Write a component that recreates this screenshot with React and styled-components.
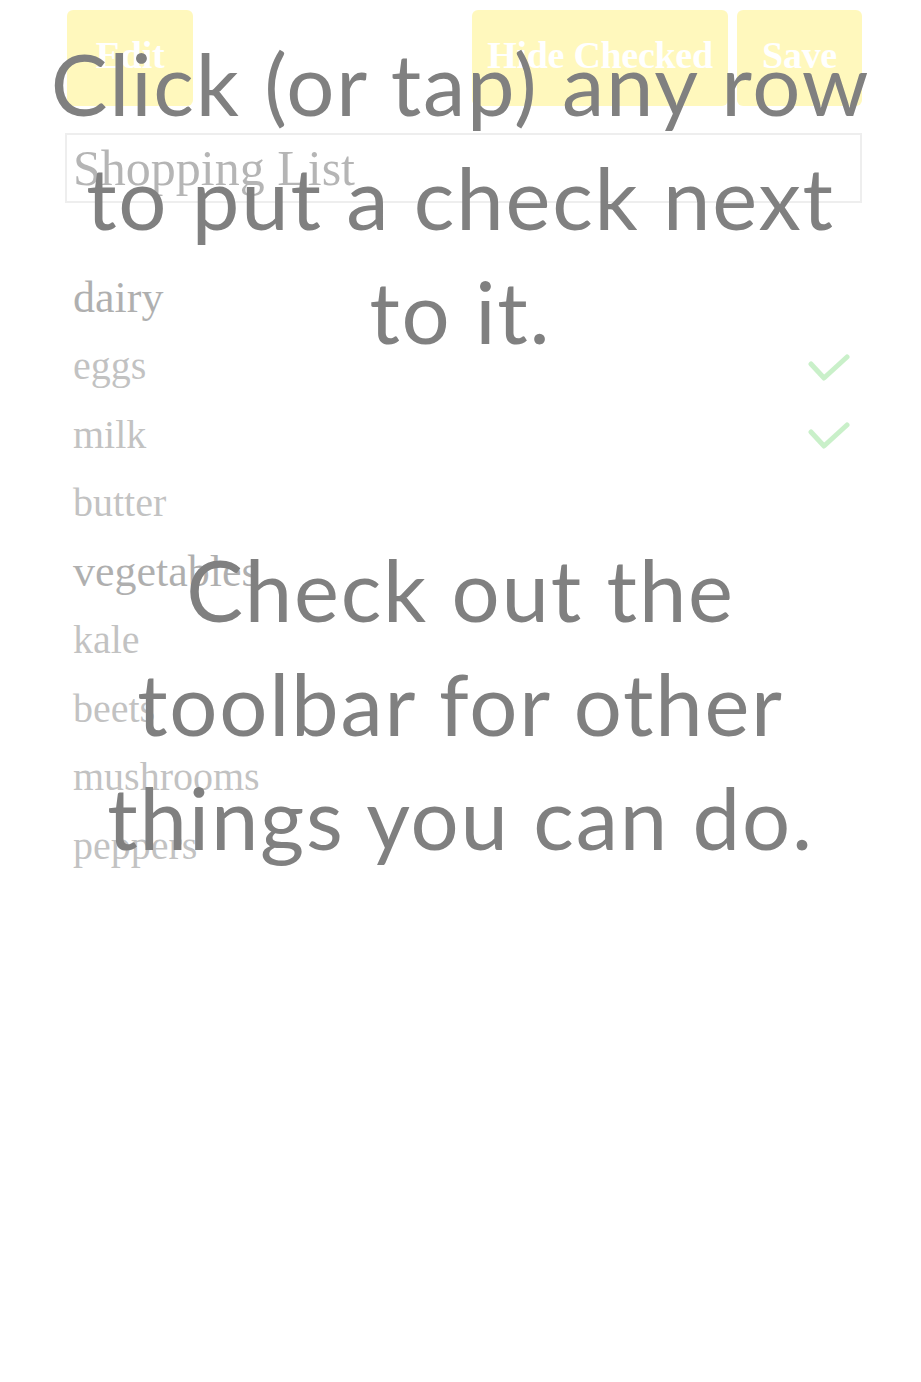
import styled, { createGlobalStyle } from "styled-components";

const GlobalStyle = createGlobalStyle`
  html, body {
    margin: 0;
    padding: 0;
    background: #ffffff;
  }
`;

const Page = styled.div`
  position: relative;
  min-height: 1382px;
  overflow: hidden;
`;

// the app underneath, washed out by the help overlay
const AppShell = styled.div`
  opacity: 0.33;
  padding: 10px 59px 0 65px;
  font-family: "Liberation Serif", "Times New Roman", serif;
`;

const Toolbar = styled.div`
  display: flex;
  align-items: stretch;
  gap: 9px;
  padding-left: 2px;
`;

const Spacer = styled.div`
  flex: 1;
`;

const ToolButton = styled.button`
  width: ${({ $width }) => $width}px;
  height: 96px;
  border: 0;
  border-radius: 6px;
  background: #ffeb3b;
  color: #ffffff;
  font-family: "Liberation Serif", "Times New Roman", serif;
  font-weight: 700;
  font-size: 38px;
  letter-spacing: -0.3px;
  padding: 0 0 6px;
`;

const TitleInput = styled.input`
  display: block;
  box-sizing: border-box;
  width: 100%;
  height: 70px;
  margin-top: 27px;
  padding: 0 6px;
  border: 2px solid #cccccc;
  background: #ffffff;
  color: #222222;
  font-family: "Liberation Serif", "Times New Roman", serif;
  font-size: 50px;
  outline: none;
`;

const List = styled.ul`
  list-style: none;
  margin: 60px 0 0;
  padding: 0;
`;

const Row = styled.li`
  display: flex;
  align-items: center;
  justify-content: space-between;
  height: 68.5px;
  padding: 0 12px 0 8px;
  font-size: ${({ $category }) => ($category ? 44 : 40)}px;
  color: ${({ $category }) => ($category ? "#111111" : "#4a4a4a")};
`;

const Check = styled.svg`
  width: 42px;
  height: 32px;
  flex: none;
  margin-top: 8px;
`;

const HelpOverlay = styled.div`
  position: absolute;
  top: 26px;
  left: 0;
  right: 0;
  text-align: center;
  color: #808080;
  font-family: Lato, "Open Sans", sans-serif;
  font-size: 85px;
  letter-spacing: 1.8px;
  line-height: 114px;
`;

const HelpText = styled.p`
  margin: 0;

  & + & {
    margin-top: 164px;
  }
`;

const items = [
  { label: "dairy", category: true },
  { label: "eggs", checked: true },
  { label: "milk", checked: true },
  { label: "butter" },
  { label: "vegetables", category: true },
  { label: "kale" },
  { label: "beets" },
  { label: "mushrooms" },
  { label: "peppers" },
];

function CheckMark() {
  return (
    <Check viewBox="0 0 42 32">
      <polyline
        points="3,10 16,24 39,3"
        fill="none"
        stroke="#5fd35f"
        strokeWidth="5"
        strokeLinecap="round"
        strokeLinejoin="round"
      />
    </Check>
  );
}

export default function App() {
  return (
    <>
      <GlobalStyle />
      <Page>
        <AppShell>
          <Toolbar>
            <ToolButton $width={126}>Edit</ToolButton>
            <Spacer />
            <ToolButton $width={256}>Hide Checked</ToolButton>
            <ToolButton $width={125}>Save</ToolButton>
          </Toolbar>
          <TitleInput defaultValue="Shopping List" readOnly />
          <List>
            {items.map((item) => (
              <Row key={item.label} $category={item.category}>
                <span>{item.label}</span>
                {item.checked && <CheckMark />}
              </Row>
            ))}
          </List>
        </AppShell>
        <HelpOverlay>
          <HelpText>
            Click (or tap) any row
            <br />
            to put a check next
            <br />
            to it.
          </HelpText>
          <HelpText>
            Check out the
            <br />
            toolbar for other
            <br />
            things you can do.
          </HelpText>
        </HelpOverlay>
      </Page>
    </>
  );
}
